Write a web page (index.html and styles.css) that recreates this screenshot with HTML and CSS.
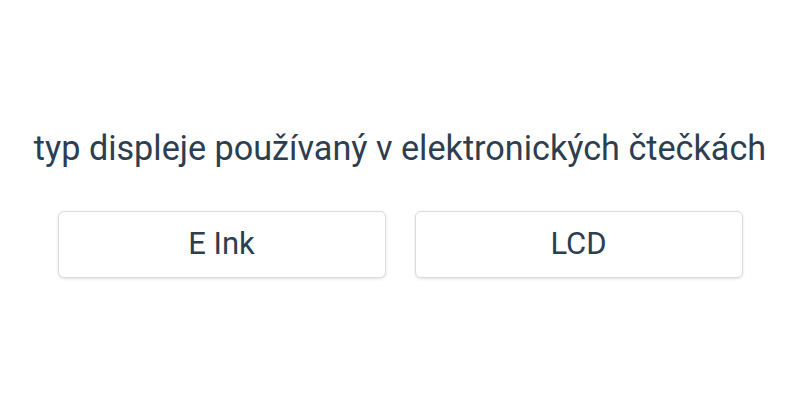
FILE: index.html
```html
<!DOCTYPE html>
<html lang="cs">
<head>
<meta charset="utf-8">
<link rel="stylesheet" href="styles.css">
</head>
<body>
<main class="quiz">
  <h1 class="question">typ displeje používaný v elektronických čtečkách</h1>
  <div class="options">
    <button class="option">E Ink</button>
    <button class="option">LCD</button>
  </div>
</main>
</body>
</html>
```
FILE: styles.css
```css
html, body {
  margin: 0;
  padding: 0;
  background: #ffffff;
  width: 800px;
  height: 400px;
}
.quiz {
  display: flex;
  flex-direction: column;
  align-items: center;
  padding-top: 128px;
  font-family: Roboto, "Liberation Sans", sans-serif;
  color: #2c3e50;
}
.question {
  margin: 0;
  font-size: 34.2px;
  font-weight: 400;
  line-height: 40px;
  color: #2c3e50;
}
.options {
  display: flex;
  gap: 29px;
  margin-top: 43px;
}
.option {
  width: 328px;
  height: 67px;
  background: #fff;
  border: 1px solid #dcdcdc;
  border-radius: 6px;
  box-shadow: 0 1px 3px rgba(0,0,0,0.12);
  font-family: Roboto, "Liberation Sans", sans-serif;
  font-size: 31px;
  color: #2c3e50;
  padding: 0 0 3px 0;
}
```
